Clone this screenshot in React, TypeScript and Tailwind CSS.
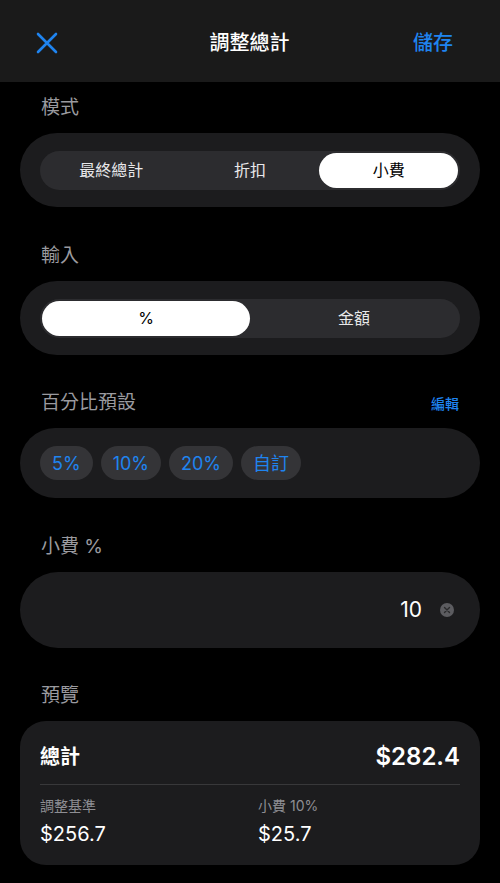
import React from "react";

const FONT = { fontFamily: "Inter, 'Noto Sans CJK TC', sans-serif" };

function Label({ children, right }: { children: React.ReactNode; right?: React.ReactNode }) {
  return (
    <div className="flex items-center justify-between h-[26px] mb-[12px] pl-[21px] pr-[21px]">
      <span className="text-[19px] text-[#9a9a9f]">{children}</span>
      {right}
    </div>
  );
}

function Segment({ items, selected }: { items: string[]; selected: number }) {
  return (
    <div className="flex h-[39px] w-full rounded-full bg-[#2c2c2f] p-[2px]">
      {items.map((it, i) => (
        <div
          key={it}
          className={
            i === selected
              ? "flex-1 flex items-center justify-center rounded-full bg-white text-black text-[16px]"
              : "flex-1 flex items-center justify-center text-[#e8e8ea] text-[16px]"
          }
        >
          {it}
        </div>
      ))}
    </div>
  );
}

export default function App() {
  return (
    <div className="w-[500px] h-[883px] bg-black text-white overflow-hidden" style={FONT}>
      <div className="h-[82px] bg-[#1a1a1a] flex items-center pl-[36px] pr-[47px] pt-[4px]">
        <div className="flex-1 flex">
          <svg width="22" height="22" viewBox="0 0 22 22" fill="none" stroke="#1f84f0" strokeWidth="2.6" strokeLinecap="round">
            <path d="M2 2 L20 20 M20 2 L2 20" />
          </svg>
        </div>
        <span className="text-[20px] font-medium text-white ml-[10px]">調整總計</span>
        <div className="flex-1 flex justify-end">
          <span className="text-[20px] font-medium text-[#1f84f0]">儲存</span>
        </div>
      </div>

      <div className="px-[20px] pt-[13px]">
        <Label>模式</Label>
        <div className="h-[74px] rounded-full bg-[#1c1c1e] flex items-center px-[20px]">
          <Segment items={["最終總計", "折扣", "小費"]} selected={2} />
        </div>

        <div className="h-[36px]" />
        <Label>輸入</Label>
        <div className="h-[74px] rounded-full bg-[#1c1c1e] flex items-center px-[20px]">
          <Segment items={["%", "金額"]} selected={0} />
        </div>

        <div className="h-[35px]" />
        <Label right={<span className="text-[14px] font-medium text-[#1f84f0]">編輯</span>}>百分比預設</Label>
        <div className="h-[70px] rounded-full bg-[#1c1c1e] flex items-center px-[20px] gap-[8px]">
          {["5%", "10%", "20%", "自訂"].map((c) => (
            <div key={c} className="h-[34px] px-[12px] rounded-full bg-[#343437] flex items-center text-[18px] text-[#1f84f0]">
              {c}
            </div>
          ))}
        </div>

        <div className="h-[36px]" />
        <Label>小費 %</Label>
        <div className="h-[76px] rounded-full bg-[#1c1c1e] flex items-center justify-end pr-[26px]">
          <span className="text-[21px] text-white">10</span>
          <div className="ml-[18px] w-[14px] h-[14px] rounded-full bg-[#5c5c60] flex items-center justify-center">
            <svg width="8" height="8" viewBox="0 0 8 8" stroke="#2a2a2c" strokeWidth="1.4" strokeLinecap="round">
              <path d="M1.5 1.5 L6.5 6.5 M6.5 1.5 L1.5 6.5" />
            </svg>
          </div>
        </div>

        <div className="h-[35px]" />
        <Label>預覽</Label>
        <div className="h-[144px] rounded-[26px] bg-[#1c1c1e] px-[20px] pt-[18px]">
          <div className="flex items-center justify-between h-[36px]">
            <span className="text-[20px] font-semibold text-white">總計</span>
            <span className="text-[24px] font-semibold text-white">$282.4</span>
          </div>
          <div className="mt-[9px] h-px bg-[#38383a]" />
          <div className="grid grid-cols-2 mt-[10px]">
            <div className="flex flex-col">
              <span className="text-[14px] text-[#8e8e93] leading-[22px]">調整基準</span>
              <span className="text-[20px] text-white leading-[30px] mt-[2px]">$256.7</span>
            </div>
            <div className="flex flex-col pl-[8px]">
              <span className="text-[14px] text-[#8e8e93] leading-[22px]">小費 10%</span>
              <span className="text-[20px] text-white leading-[30px] mt-[2px]">$25.7</span>
            </div>
          </div>
        </div>
      </div>
    </div>
  );
}
